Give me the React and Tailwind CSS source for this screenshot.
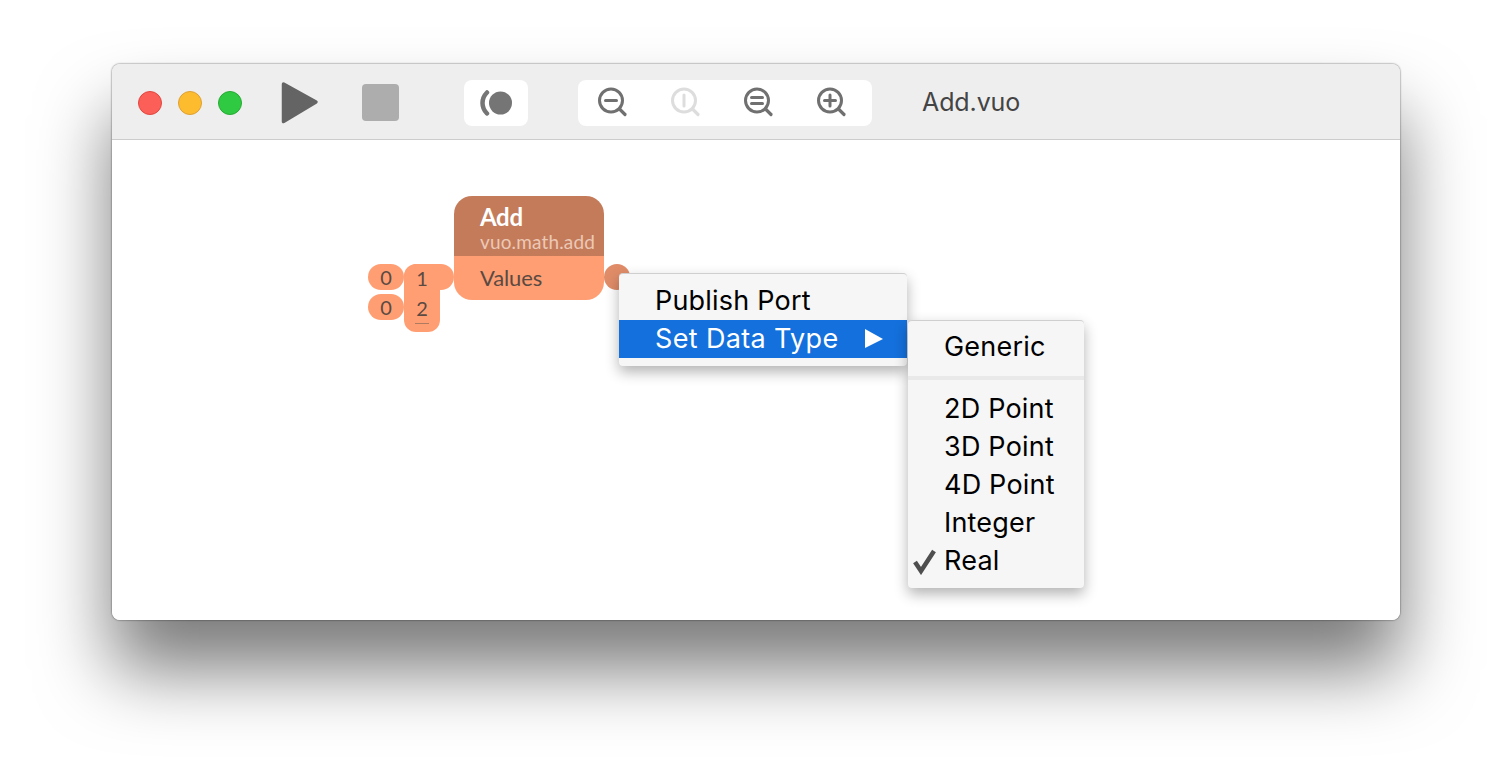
import React from "react";

const sans = { fontFamily: '"Inter", "Liberation Sans", sans-serif' };
const pt = { fontFamily: 'Lato, "Open Sans", sans-serif' };

function Lens({ color = "#707070", children }) {
  return (
    <svg width="32" height="32" viewBox="0 0 32 32" fill="none" stroke={color} strokeLinecap="round">
      <circle cx="14" cy="13.5" r="11.5" strokeWidth="3" />
      <path d="M22.5 22 L28 27.5" strokeWidth="3.2" />
      {children}
    </svg>
  );
}

function Toolbar() {
  return (
    <div className="flex h-[76px] items-center rounded-t-[8px] border-b border-[#cccccc] bg-[#eeeeee] pt-[2px]">
      <div className="ml-[26px] flex gap-[16px]">
        <span className="h-[24px] w-[24px] rounded-full border border-[#e2463f] bg-[#fc5f57]" />
        <span className="h-[24px] w-[24px] rounded-full border border-[#dea034] bg-[#fdbc2e]" />
        <span className="h-[24px] w-[24px] rounded-full border border-[#27aa35] bg-[#2fca41]" />
      </div>
      <svg className="ml-[39px]" width="38" height="44" viewBox="0 0 38 44">
        <path d="M2.5 3 L35 21 L2.5 40.5 Z" fill="#646464" stroke="#646464" strokeWidth="3.5" strokeLinejoin="round" />
      </svg>
      <div className="ml-[43px] h-[37px] w-[37px] rounded-[4px] bg-[#adadad]" />
      <div className="ml-[65px] flex h-[46px] w-[64px] items-center justify-center rounded-[8px] bg-white">
        <svg width="34" height="26" viewBox="0 0 34 26" className="translate-x-[1px]">
          <path d="M7 2.5 C1 8.5 1 17.5 7 23.5" fill="none" stroke="#757575" strokeWidth="4.5" strokeLinecap="round" />
          <circle cx="20.5" cy="13" r="11.5" fill="#757575" />
        </svg>
      </div>
      <div className="ml-[50px] flex h-[46px] w-[294px] items-center gap-[41px] rounded-[8px] bg-white pl-[19px]">
        <Lens>
          <path d="M8.5 13.5 H19.5" strokeWidth="3" />
        </Lens>
        <Lens color="#dddddd">
          <path d="M14 8 V19" strokeWidth="3" />
        </Lens>
        <Lens>
          <path d="M8.5 10.5 H19.5 M8.5 16.5 H19.5" strokeWidth="3" />
        </Lens>
        <Lens>
          <path d="M8.5 13.5 H19.5 M14 8 V19" strokeWidth="3" />
        </Lens>
      </div>
      <div className="ml-[50px] text-[25px] tracking-[-0.1px] text-[#444444]" style={sans}>Add.vuo</div>
    </div>
  );
}

function Node() {
  return (
    <>
      <div className="absolute left-[342px] top-[56px] w-[150px] overflow-hidden rounded-[18px]" style={pt}>
        <div className="h-[60px] bg-[#c47b5a] pl-[26px]">
          <div className="pt-[7px] text-[24px] leading-[28px] font-bold tracking-[-0.3px] text-white">Add</div>
          <div className="text-[19px] leading-[21px] tracking-[0.15px] text-[#ecc8b6]">vuo.math.add</div>
        </div>
        <div className="h-[44px] bg-[#ff9e73] pl-[26px] pt-[7px] text-[22px] leading-[30px] tracking-[-0.1px] text-[#5a4a42]">Values</div>
      </div>
      <div className="absolute left-[492px] top-[124px] h-[26px] w-[26px] rounded-full bg-[#e08c68]" />
      <div className="absolute left-[256px] top-[124px] flex h-[26px] w-[36px] items-center justify-center rounded-[13px] bg-[#ff9e73] text-[20px] text-[#5a4a42]" style={pt}>0</div>
      <div className="absolute left-[256px] top-[154px] flex h-[26px] w-[36px] items-center justify-center rounded-[13px] bg-[#ff9e73] text-[20px] text-[#5a4a42]" style={pt}>0</div>
      <div className="absolute left-[292px] top-[124px] h-[26px] w-[50px] rounded-[13px] bg-[#ff9e73]" />
      <div className="absolute left-[292px] top-[124px] h-[68px] w-[36px] rounded-[12px] bg-[#ff9e73] text-center text-[20px] leading-[28px] text-[#5a4a42]" style={pt}>
        <div>1</div>
        <div className="mt-[2px]">2</div>
        <div className="mx-auto mt-[1px] h-[1px] w-[14px] bg-[#b07a60]" />
      </div>
    </>
  );
}

function Row({ children, active, check }) {
  return (
    <div className={"relative flex h-[38px] items-center pl-[36px] text-[27px] tracking-[0.2px] " + (active ? "bg-[#1470dc] text-white" : "text-black")}>
      {check && (
        <svg className="absolute left-[5px] top-[7px]" width="24" height="26" viewBox="0 0 24 26">
          <path d="M2 13 L8 22 L21 2" fill="none" stroke="#4e4e4e" strokeWidth="4.5" />
        </svg>
      )}
      {children}
    </div>
  );
}

function Menus() {
  return (
    <>
      <div className="absolute left-[507px] top-[133px] h-[93px] w-[288px] rounded-[4px] border-t border-[#cfcfcf] bg-[#f6f6f6] pt-[8px] shadow-[0_6px_14px_rgba(0,0,0,0.3)]" style={sans}>
        <Row>Publish Port</Row>
        <Row active>
          <span className="tracking-[0.35px]">Set Data Type</span>
          <svg className="absolute left-[246px] top-[9px]" width="18" height="20" viewBox="0 0 18 20">
            <path d="M0 0 L18 10 L0 19 Z" fill="white" />
          </svg>
        </Row>
      </div>
      <div className="absolute left-[796px] top-[180px] h-[268px] w-[176px] rounded-[4px] border-t border-[#cfcfcf] bg-[#f6f6f6] pt-[7px] shadow-[0_6px_14px_rgba(0,0,0,0.3)]" style={sans}>
        <Row>Generic</Row>
        <div className="mb-[10px] mt-[10px] h-[4px] bg-[#e9e9e9]" />
        <Row>2D Point</Row>
        <Row>3D Point</Row>
        <Row>4D Point</Row>
        <Row>Integer</Row>
        <Row check>Real</Row>
      </div>
    </>
  );
}

export default function App() {
  return (
    <div className="h-[780px] w-[1512px] overflow-hidden bg-white pl-[112px] pt-[64px]">
      <div className="h-[556px] w-[1288px] rounded-[8px] bg-white shadow-[0_50px_72px_rgba(0,0,0,0.52),0_0_2px_rgba(0,0,0,0.7)]">
        <Toolbar />
        <div className="relative h-[480px] rounded-b-[8px] bg-white">
          <Node />
          <Menus />
        </div>
      </div>
    </div>
  );
}
